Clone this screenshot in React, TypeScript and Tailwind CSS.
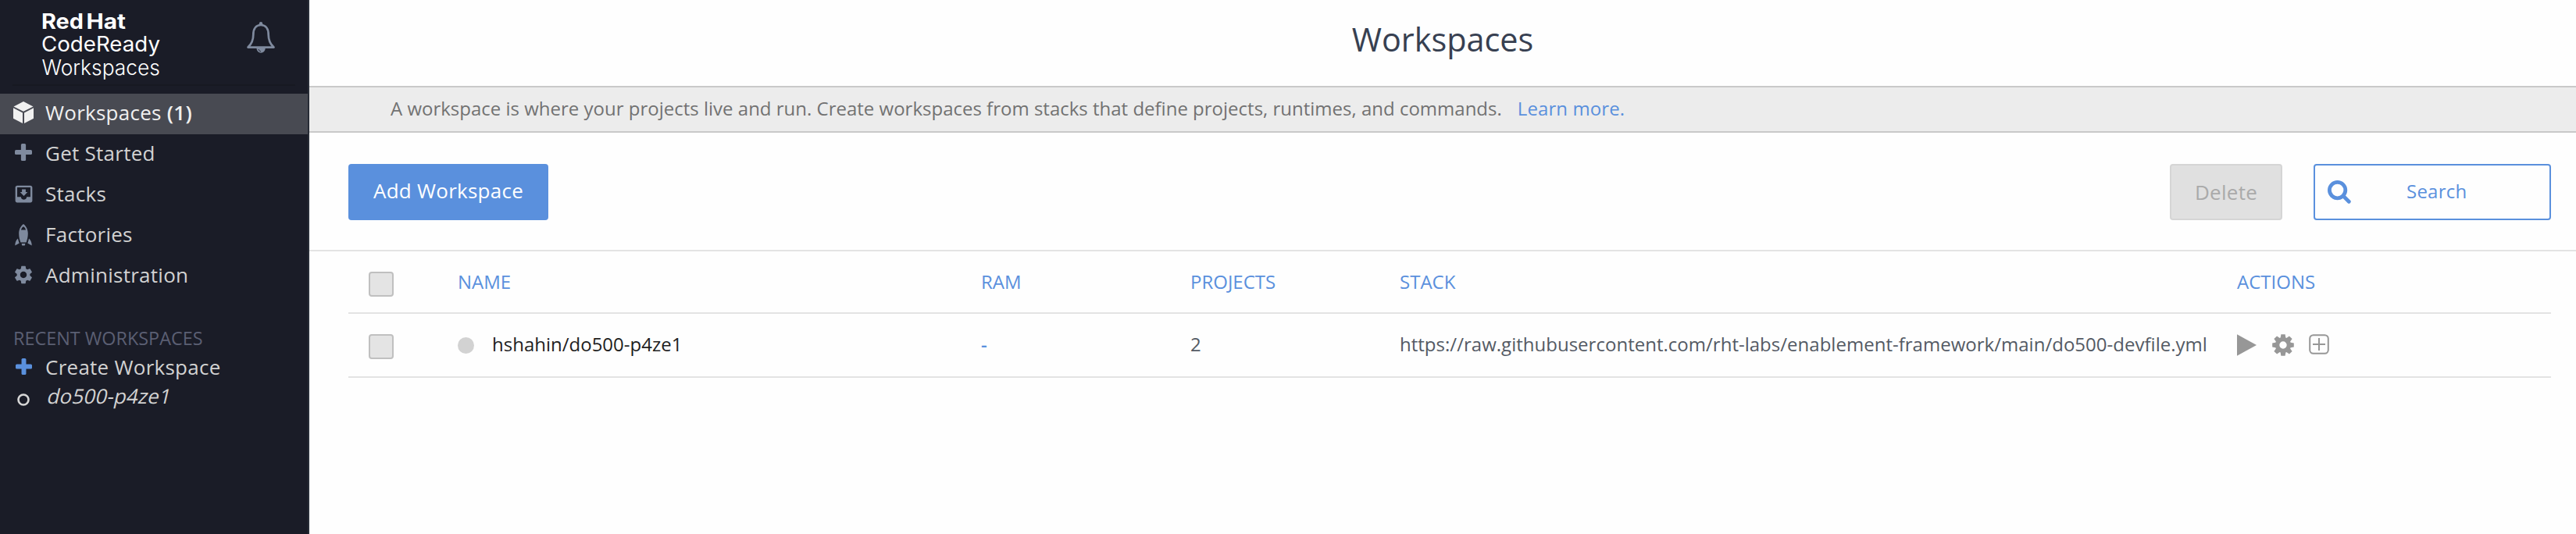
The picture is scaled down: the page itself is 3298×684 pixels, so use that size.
import React from "react";
import { MdMoveToInbox, MdSettings } from "react-icons/md";

const GRID = "grid grid-cols-[140px_670px_268px_268px_1072px_402px] items-center";

function LogoBlock() {
  return (
    <svg width="164" height="98" viewBox="0 -6 164 98" fill="#ffffff" fontFamily="Inter, sans-serif" fontSize="27">
      <text x="0" y="21.5" fontWeight="700" textLength="54" lengthAdjust="spacingAndGlyphs">Red</text>
      <text x="57.5" y="21.5" fontWeight="700" textLength="50.5" lengthAdjust="spacingAndGlyphs">Hat</text>
      <text x="0" y="51" fontWeight="400" textLength="152" lengthAdjust="spacingAndGlyphs">CodeReady</text>
      <text x="0.5" y="80.5" fontWeight="300" textLength="151.5" lengthAdjust="spacingAndGlyphs">Workspaces</text>
    </svg>
  );
}

function BellIcon() {
  return (
    <svg width="38" height="42" viewBox="0 0 38 42" fill="none" stroke="#7f8a9e" strokeWidth="2.7" strokeLinejoin="round">
      <path d="M2.5 33.6C7.5 29 9.3 24 9.3 17.5 C9.3 9.5 13 5 19 5 C25 5 28.7 9.5 28.7 17.5 C28.7 24 30.5 29 35.5 33.6Z" />
      <circle cx="19" cy="3.2" r="2.2" fill="#7f8a9e" stroke="none" />
      <path d="M13.5 35a5.6 5.8 0 0 0 11.2 0z" fill="#7f8a9e" stroke="none" />
      <path d="M16 36c.4 1.7 1.4 2.6 3 2.9" stroke="#1a1c27" strokeWidth="0.9" />
    </svg>
  );
}

function CubeIcon() {
  return (
    <svg className="-mt-1" width="28" height="30" viewBox="0 0 28 30" fill="#f0f0f0">
      <path d="M14 1 L26.5 7.4 L14 13.8 L1.5 7.4Z" />
      <path d="M1 9.3 L13 15.4 V29 L1 22.8Z" />
      <path d="M27 9.3 L15 15.4 V29 L27 22.8Z" />
    </svg>
  );
}

function PlusIcon({ color, size }: { color: string; size: number }) {
  return (
    <svg width={size} height={size} viewBox="0 0 22 22" fill={color}>
      <rect x="7.9" y="0" width="6.2" height="22" rx="1.6" />
      <rect x="0" y="7.9" width="22" height="6.2" rx="1.6" />
    </svg>
  );
}

function RocketIcon() {
  return (
    <svg className="-mt-[3px]" width="22" height="28" viewBox="0 0 22 28" fill="#7f8a9e">
      <path fillRule="evenodd" d="M11 0C14.5 2.6 16.8 7 16.8 12.2C16.8 16.5 15.7 20.5 14.6 23.4H7.4C6.3 20.5 5.2 16.5 5.2 12.2C5.2 7 7.5 2.6 11 0ZM8 7.6H14C13.6 5.6 12.6 4 11 3.2C9.4 4 8.4 5.6 8 7.6Z" />
      <path d="M4 18.6C4.4 21 5 23 5.7 24.6L0.3 27.6C0.3 23.8 1.4 20.8 4 18.6Z" />
      <path d="M18 18.6C17.6 21 17 23 16.3 24.6L21.7 27.6C21.7 23.8 20.6 20.8 18 18.6Z" />
      <path d="M8.6 25h4.8l-.7 2.6H9.3z" />
    </svg>
  );
}

function RingIcon() {
  return (
    <svg width="16" height="16" viewBox="0 0 16 16" fill="none" stroke="#d6d6d6" strokeWidth="2.6">
      <circle cx="8" cy="8" r="6.5" />
    </svg>
  );
}

function GearIcon() {
  return (
    <svg width="28" height="28" viewBox="-14 -14 28 28" fill="#979797">
      {[0, 45, 90, 135, 180, 225, 270, 315].map((angle) => (
        <path key={angle} d="M-3.5 -8.5 L-2.6 -13.8 H2.6 L3.5 -8.5Z" transform={`rotate(${angle})`} />
      ))}
      <circle r="7.4" fill="none" stroke="#979797" strokeWidth="5.4" />
    </svg>
  );
}

function SearchIcon() {
  return (
    <svg width="30" height="30" viewBox="0 0 30 30" fill="none" stroke="#5a90dd" strokeWidth="4.8" strokeLinecap="round">
      <circle cx="12.6" cy="12.6" r="10.2" />
      <path d="M20.5 20.5 L27.3 27.3" />
    </svg>
  );
}

function NavItem({ icon, label, count, active }: { icon: React.ReactNode; label: string; count?: number; active?: boolean }) {
  return (
    <div className={`flex h-[52px] items-center tracking-[0.26px] ${active ? "bg-[#484a52] text-[#f0f0f0]" : "text-[#d2d2d2]"}`}>
      <span className="flex w-[58px] justify-center pl-[2px]">{icon}</span>
      <span className="whitespace-pre pb-1">
        {label}
        {count !== undefined && <span className="font-semibold"> ({count})</span>}
      </span>
    </div>
  );
}

function Checkbox() {
  return <span className="block size-8 rounded-[4px] border-2 border-[#c0c0c0] bg-[#e4e4e4]" />;
}

export default function App() {
  return (
    <div className="flex h-[684px] w-[3298px] overflow-hidden bg-[#fefefe] font-['Open_Sans',sans-serif] text-[24px]">
      <aside className="flex w-[396px] shrink-0 flex-col border-r-2 border-[#282d37] bg-[#1a1c27] text-[26px]">
        <div className="mx-4 flex h-[110px] shrink-0 items-start border-b-2 border-[#171922] pl-[37px] pt-[9px]">
          <LogoBlock />
          <div className="ml-[98px] mt-[18px]">
            <BellIcon />
          </div>
        </div>
        <nav className="mt-[10px]">
          <NavItem active icon={<CubeIcon />} label="Workspaces" count={1} />
          <NavItem icon={<span className="-mt-1.5"><PlusIcon color="#7f8a9e" size={22} /></span>} label="Get Started" />
          <NavItem icon={<MdMoveToInbox size={29} color="#7f8a9e" className="-mt-1" />} label="Stacks" />
          <NavItem icon={<RocketIcon />} label="Factories" />
          <NavItem icon={<MdSettings size={28} color="#7f8a9e" className="-mt-1" />} label="Administration" />
        </nav>
        <h2 className="mt-[36px] flex h-[35px] items-center pl-[17px] text-[23.4px] text-[#5b5f73]">RECENT WORKSPACES</h2>
        <div className="flex h-[38px] items-center tracking-[0.26px] text-[#d2d2d2]">
          <span className="flex w-[58px] justify-center pb-[2px] pl-[2px]">
            <PlusIcon color="#5a90dd" size={21} />
          </span>
          <span>Create Workspace</span>
        </div>
        <div className="flex h-[38px] items-center text-[#d2d2d2]">
          <span className="flex w-[58px] justify-center pl-[2px] pt-[7px]">
            <RingIcon />
          </span>
          <span className="ml-[3px] -skew-x-[13deg] pb-[2px] tracking-[0.15px]">do500-p4ze1</span>
        </div>
      </aside>

      <main className="flex w-[2902px] flex-col">
        <h1 className="flex h-[110px] items-center justify-center pb-[9px] text-[41.4px] text-[#374051]">Workspaces</h1>
        <div className="flex h-[60px] items-center border-y-2 border-[#c9c9c9] bg-[#ececec] pb-[3px] pl-[104px] text-[#727272]">
          <span>A workspace is where your projects live and run. Create workspaces from stacks that define projects, runtimes, and commands.</span>
          <a className="ml-5 tracking-[0.1px] text-[#5a90dd]">Learn more.</a>
        </div>

        <div className="flex h-[152px] items-start border-b-2 border-[#e3e3e3] pl-[50px] pr-8 pt-10">
          <button className="flex h-[72px] w-64 items-center justify-center rounded-[4px] bg-[#5a90dd] pb-1 text-[26px] tracking-[0.26px] text-white">
            Add Workspace
          </button>
          <button className="ml-auto flex h-[72px] w-36 items-center justify-center rounded-[4px] border-2 border-[#d5d5d5] bg-[#e0e0e0] text-[26px] tracking-[0.26px] text-[#aaaaaa]">
            Delete
          </button>
          <div className="ml-10 flex h-[72px] w-[304px] items-center rounded-[4px] border-2 border-[#5a90dd] pl-4 text-[#5a90dd]">
            <SearchIcon />
            <span className="ml-[71px] pb-[3px] tracking-[0.24px]">Search</span>
          </div>
        </div>

        <div className="ml-[50px] mr-8">
          <div className={`${GRID} h-20 border-b-2 border-[#e3e3e3] text-[#5a90dd]`}>
            <span className="pl-[26px] pt-1.5"><Checkbox /></span>
            <span>NAME</span>
            <span>RAM</span>
            <span>PROJECTS</span>
            <span>STACK</span>
            <span>ACTIONS</span>
          </div>
          <div className={`${GRID} h-[82px] border-b-2 border-[#e3e3e3] text-[#545a64]`}>
            <span className="pl-[26px] pt-1"><Checkbox /></span>
            <span className="flex items-center">
              <span className="size-[21px] rounded-full bg-[#d2d2d2]" />
              <span className="ml-[23px] pb-[3px] text-[#1f1f1f]">hshahin/do500-p4ze1</span>
            </span>
            <span className="pb-[3px] font-semibold text-[#5a90dd]">-</span>
            <span className="pb-[3px]">2</span>
            <span className="pb-[3px] tracking-[0.015px]">https://raw.githubusercontent.com/rht-labs/enablement-framework/main/do500-devfile.yml</span>
            <span className="flex items-center">
              <svg width="25" height="28" viewBox="0 0 25 28" fill="#979797">
                <path d="M0 0.3 L25 14 L0 27.7Z" />
              </svg>
              <span className="ml-5"><GearIcon /></span>
              <svg className="-mt-[3px] ml-[19px]" width="26" height="26" viewBox="0 0 26 26" fill="none" stroke="#979797" strokeWidth="2">
                <rect x="1.2" y="1.2" width="23.6" height="23.6" rx="4.5" />
                <path d="M13 5V21M5 13H21" />
              </svg>
            </span>
          </div>
        </div>
      </main>
    </div>
  );
}
